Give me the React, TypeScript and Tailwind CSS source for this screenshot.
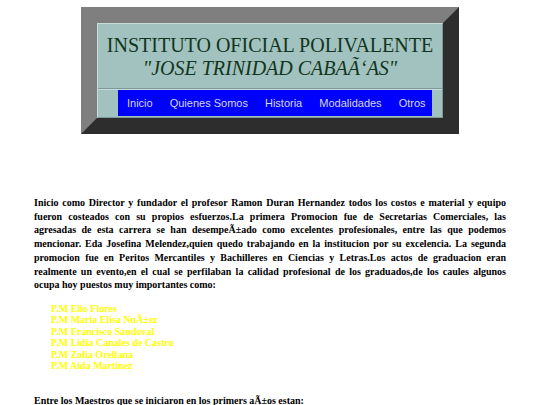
import React from "react";

export default function App() {
  const names = [
    "P.M Elio Flores",
    "P.M Maria Elisa NuÃ±ez",
    "P.M Francisco Sandoval",
    "P.M Lidia Canales de Castro",
    "P.M Zolia Orellana",
    "P.M Aida Martinez",
  ];
  const nav = ["Inicio", "Quienes Somos", "Historia", "Modalidades", "Otros"];
  return (
    <div className="bg-white h-[405px] w-[540px] overflow-hidden font-['Liberation_Serif',serif]">
      <div className="pt-[7px] flex justify-center">
        <div className="w-[378px] h-[127px] border-[16px] border-t-[#7f7f7f] border-l-[#7f7f7f] border-b-[#2d2d2d] border-r-[#2d2d2d]">
          <div className="h-full bg-[#a1c2be] border border-t-[#c9dcd9] border-l-[#c9dcd9] border-b-[#7e9a97] border-r-[#7e9a97] flex flex-col">
            <div className="h-[64px] pt-[2px] flex flex-col items-center justify-center text-[#123520] font-['Liberation_Serif',serif] text-[20px] leading-[23px] whitespace-nowrap">
              <div>INSTITUTO OFICIAL POLIVALENTE</div>
              <div className="italic">"JOSE TRINIDAD CABAÃ‘AS"</div>
            </div>
            <div className="h-px bg-[#7e9a97]" />
            <div className="h-px bg-[#c9dcd9]" />
            <div className="flex pl-[20px]">
              <div className="w-[314px] h-[26px] bg-[#0000ff] flex items-center pl-[9px] gap-[17px] font-['Liberation_Sans',sans-serif] text-[11px] text-[#d6d6e6] whitespace-nowrap">
                {nav.map((n) => (
                  <span key={n}>{n}</span>
                ))}
              </div>
            </div>
          </div>
        </div>
      </div>
      <p className="mt-[62px] mx-[34px] text-[10px] leading-[13.7px] font-bold text-black text-justify">
        Inicio como Director y fundador el profesor Ramon Duran Hernandez todos los costos e material y equipo fueron costeados con su propios esfuerzos.La primera Promocion fue de Secretarias Comerciales, las agresadas de esta carrera se han desempeÃ±ado como excelentes profesionales, entre las que podemos mencionar. Eda Josefina Melendez,quien quedo trabajando en la institucion por su excelencia. La segunda promocion fue en Peritos Mercantiles y Bachilleres en Ciencias y Letras.Los actos de graduacion eran realmente un evento,en el cual se perfilaban la calidad profesional de los graduados,de los caules algunos ocupa hoy puestos muy importantes como:
      </p>
      <div className="mt-[11px] ml-[51px] text-[10px] leading-[11.5px] font-bold text-[#ffff00]">
        {names.map((n) => (
          <div key={n}>{n}</div>
        ))}
      </div>
      <p className="mt-[22px] mx-[34px] text-[10px] leading-[13.7px] font-bold text-black">
        Entre los Maestros que se iniciaron en los primers aÃ±os estan:
      </p>
    </div>
  );
}
